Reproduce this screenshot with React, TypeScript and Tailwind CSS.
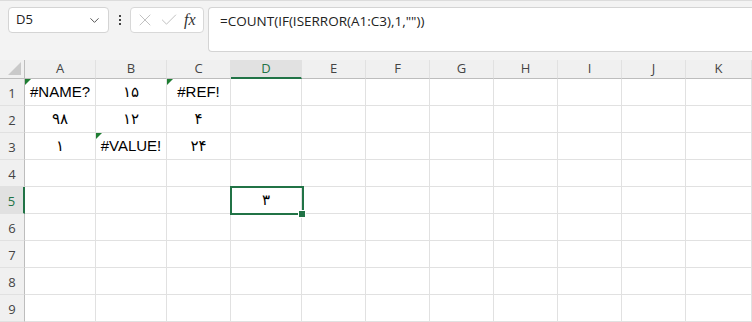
import { ChevronDown, X, Check } from 'lucide-react'

const cols = [
  { key: 'A', w: 71 },
  { key: 'B', w: 71 },
  { key: 'C', w: 64 },
  { key: 'D', w: 71 },
  { key: 'E', w: 64 },
  { key: 'F', w: 64 },
  { key: 'G', w: 64 },
  { key: 'H', w: 64 },
  { key: 'I', w: 64 },
  { key: 'J', w: 64 },
  { key: 'K', w: 66 },
]

// cell values, flag = green error triangle
const data: Record<string, { v: string; flag?: boolean }> = {
  A1: { v: '#NAME?', flag: true },
  B1: { v: '۱۵' },
  C1: { v: '#REF!', flag: true },
  A2: { v: '۹۸' },
  B2: { v: '۱۲' },
  C2: { v: '۴' },
  A3: { v: '۱' },
  B3: { v: '#VALUE!', flag: true },
  C3: { v: '۲۴' },
  D5: { v: '۳' },
}

const rows = [1, 2, 3, 4, 5, 6, 7, 8, 9]
const uiFont = { fontFamily: '"Open Sans", "Noto Sans", sans-serif' }
const cellFont = { fontFamily: '"Liberation Sans", "DejaVu Sans", sans-serif' }

export default function App() {
  return (
    <div className="h-[322px] w-[752px] overflow-hidden bg-white" style={uiFont}>
      {/* formula bar */}
      <div className="flex h-[60px] items-start border-t border-[#dcdcdc] bg-[#f3f3f3] pl-[8px] pt-[6px]">
        <div className="flex h-[26px] w-[101px] items-center justify-between rounded-[4px] border border-[#d4d4d4] bg-white pl-[7px] pr-[6px] text-[13px] text-[#222]">
          <span>D5</span>
          <ChevronDown size={15} strokeWidth={1.6} className="text-[#555]" />
        </div>
        <div className="flex h-[26px] w-[21px] flex-col items-center justify-center gap-[2px]">
          <span className="block h-[2px] w-[2px] bg-[#444]" />
          <span className="block h-[2px] w-[2px] bg-[#444]" />
          <span className="block h-[2px] w-[2px] bg-[#444]" />
        </div>
        <div className="flex h-[26px] w-[74px] items-center rounded-[4px] border border-[#d8d8d8] bg-white pl-[4px]">
          <X size={20} strokeWidth={1} className="text-[#b5b5b5]" />
          <Check size={20} strokeWidth={1} className="ml-[4px] text-[#b5b5b5]" />
          <span
            className="ml-[5px] text-[16px] italic leading-none text-[#333]"
            style={{ fontFamily: '"Liberation Serif", serif' }}
          >
            fx
          </span>
        </div>
        <div className="ml-[4px] flex h-[45px] flex-1 items-start rounded-l-[4px] border border-r-0 border-[#d4d4d4] bg-white pl-[11px] pt-[3px] text-[13.5px] text-[#222]">
          =COUNT(IF(ISERROR(A1:C3),1,""))
        </div>
      </div>

      {/* grid */}
      <div
        className="grid"
        style={{
          gridTemplateColumns: `25px ${cols.map((c) => c.w + 'px').join(' ')}`,
          gridTemplateRows: `19px repeat(9, 27px)`,
        }}
      >
        <div className="relative border-b border-r border-[#bdbdbd] bg-[#f0f0f0]">
          <div className="absolute bottom-[3px] right-[3px] h-0 w-0 border-b-[13px] border-l-[13px] border-b-[#c9c9c9] border-l-transparent" />
        </div>
        {cols.map((c) => (
          <div
            key={c.key}
            className={
              c.key === 'D'
                ? 'flex items-center justify-center border-b-2 border-r border-b-[#217346] border-r-[#e1e1e1] bg-[#e1e1e1] text-[13px] text-[#217346]'
                : 'flex items-center justify-center border-b border-r border-b-[#bdbdbd] border-r-[#e1e1e1] bg-[#f0f0f0] text-[13px] text-[#444]'
            }
          >
            {c.key}
          </div>
        ))}

        {rows.map((r) => (
          <RowCells key={r} r={r} />
        ))}
      </div>
    </div>
  )
}

function RowCells({ r }: { r: number }) {
  const active = r === 5
  return (
    <>
      <div
        className={
          active
            ? 'flex items-end justify-center border-b border-r-2 border-b-[#e1e1e1] border-r-[#217346] bg-[#e1e1e1] pb-[2px] text-[13px] text-[#217346]'
            : 'flex items-end justify-center border-b border-r border-b-[#e1e1e1] border-r-[#bdbdbd] bg-[#f0f0f0] pb-[2px] text-[13px] text-[#444]'
        }
      >
        {r}
      </div>
      {cols.map((c) => {
        const id = c.key + r
        const cell = data[id]
        const selected = id === 'D5'
        return (
          <div
            key={id}
            className={
              selected
                ? 'relative z-10 flex items-center justify-center border-b border-r border-[#e1e1e1] text-[15px] text-black'
                : 'relative flex items-center justify-center border-b border-r border-[#e1e1e1] text-[15px] text-black'
            }
            style={cellFont}
          >
            {cell?.flag && (
              <div className="absolute left-0 top-0 h-0 w-0 border-r-[6px] border-t-[6px] border-r-transparent border-t-[#1e7d32]" />
            )}
            {cell?.v}
            {selected && (
              <>
                <div className="pointer-events-none absolute -left-[1px] -top-[1px] h-[29px] w-[74px] border-2 border-[#217346]" />
                <div className="absolute -bottom-[5px] -right-[5px] box-content h-[6px] w-[6px] border border-white bg-[#217346]" />
              </>
            )}
          </div>
        )
      })}
    </>
  )
}
